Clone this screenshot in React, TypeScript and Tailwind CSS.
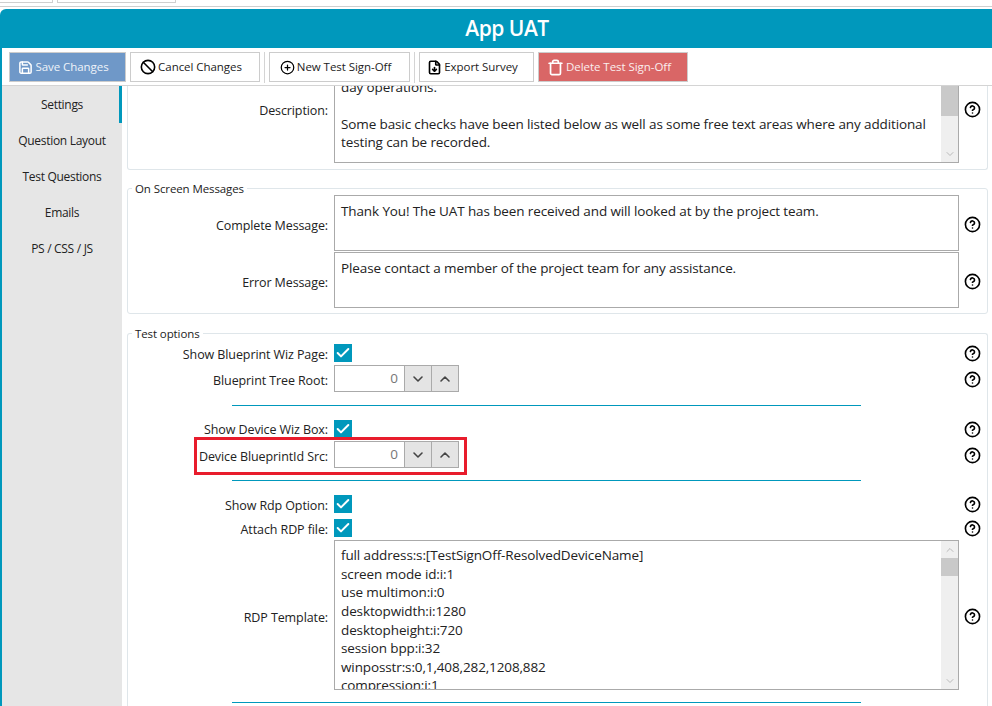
import React from "react";
import { Save, Ban, CirclePlus, Trash, Check, ChevronDown, ChevronUp, CircleHelp, FileDown } from "lucide-react";

function Help({ className = "" }: { className?: string }) {
  return (
    <div className={"absolute left-[836px] w-4 h-4 -translate-y-1/2 " + className}>
      <CircleHelp size={17} strokeWidth={2.3} className="text-black" />
    </div>
  );
}

function ToolBtn({ w, icon, label, variant }: { w: string; icon: React.ReactNode; label: string; variant?: string }) {
  return (
    <div className={`${w} h-[30px] shrink-0 flex items-center justify-center gap-[2px] pr-[8px] border border-[#cccccc] text-[11.5px] tracking-[-0.05px] ${variant ?? "bg-white text-[#222222]"}`}>
      {icon}
      <span>{label}</span>
    </div>
  );
}

function Row({ label, h, mt, labelPt, children }: { label: string; h: string; mt?: string; labelPt?: string; children: React.ReactNode }) {
  return (
    <div className={`flex items-center ${h} ${mt ?? ""} relative`}>
      <div className={`w-[200px] ${labelPt ?? "pt-[4px]"} text-right text-[12.5px] tracking-[-0.1px] text-[#222222] shrink-0`}>{label}</div>
      <div className="ml-[6px]">{children}</div>
      <Help className="top-1/2" />
    </div>
  );
}

function Cb() {
  return (
    <div className="w-[18px] h-[18px] bg-[#0098bc] flex items-center justify-center">
      <Check size={16} strokeWidth={3} className="text-white" />
    </div>
  );
}

function Spin() {
  return (
    <div className="flex w-[125px] h-[27px] border border-[#aaaaaa]">
      <div className="flex-1 flex items-center justify-end pr-[6px] text-[13.5px] text-[#777777]">0</div>
      <div className="w-[27px] bg-[#e4e4e4] border-l border-[#aaaaaa] flex items-center justify-center">
        <ChevronDown size={16} strokeWidth={2.4} className="text-[#444444]" />
      </div>
      <div className="w-[27px] bg-[#e4e4e4] border-l border-[#aaaaaa] flex items-center justify-center">
        <ChevronUp size={16} strokeWidth={2.4} className="text-[#444444]" />
      </div>
    </div>
  );
}

function Rule({ mt }: { mt: string }) {
  return <div className={`${mt} ml-[104px] w-[629px] h-px bg-[#0098bc]`} />;
}

function ScrollBar({ thumbTop, thumbH, up }: { thumbTop: string; thumbH: string; up: boolean }) {
  return (
    <div className="absolute right-0 top-0 bottom-0 w-[17px] bg-[#efefef] flex flex-col items-center justify-between">
      <div className={`w-full h-[17px] flex items-center justify-center ${up ? "" : "invisible"}`}>
        <ChevronUp size={12} strokeWidth={1.5} className="text-[#a8a8a8]" />
      </div>
      <div className={`absolute left-0 w-full bg-[#c9c9c9] ${thumbTop} ${thumbH}`} />
      <div className="w-full h-[17px] flex items-center justify-center">
        <ChevronDown size={12} strokeWidth={1.5} className="text-[#a8a8a8]" />
      </div>
    </div>
  );
}

const rdp = [
  "full address:s:[TestSignOff-ResolvedDeviceName]",
  "screen mode id:i:1",
  "use multimon:i:0",
  "desktopwidth:i:1280",
  "desktopheight:i:720",
  "session bpp:i:32",
  "winposstr:s:0,1,408,282,1208,882",
  "compression:i:1",
];

export default function App() {
  return (
    <div className="w-[992px] h-[706px] bg-white overflow-hidden flex flex-col font-['Open_Sans',sans-serif] text-[#222222]">
      {/* window tab strip */}
      <div className="h-[9px] shrink-0">
        <div className="h-[3px] flex items-stretch">
          <div className="w-[53px] border-r border-b border-[#cfcfcf]" />
          <div className="ml-[4px] w-[119px] border-x border-b border-[#cfcfcf]" />
        </div>
        <div className="mt-[3px] h-px bg-[#cfcfcf]" />
      </div>

      <div className="flex-1 flex flex-col bg-[#0098bc] pl-[2px] rounded-tl-[6px] overflow-hidden">
        {/* title */}
        <div className="h-[39px] shrink-0 flex items-center justify-center pl-[20px] text-white text-[21px] font-semibold tracking-[-0.5px]">
          App UAT
        </div>

        <div className="flex-1 flex flex-col bg-white min-h-0">
          {/* toolbar */}
          <div className="h-[38px] shrink-0 flex items-center pl-[7px] border-b border-[#d4d4d4] pt-[1px]">
            <ToolBtn w="w-[117px]" variant="bg-[#6f98c8] text-[#eef3f9]" icon={<Save size={15} strokeWidth={2.4} className="text-white" />} label="Save Changes" />
            <div className="w-[4px]" />
            <ToolBtn w="w-[130px]" icon={<Ban size={16} strokeWidth={2.4} className="text-black" />} label="Cancel Changes" />
            <div className="w-px h-[31px] bg-[#d4d4d4] mx-[4px]" />
            <ToolBtn w="w-[141px]" icon={<CirclePlus size={15} strokeWidth={2} className="text-black" />} label="New Test Sign-Off" />
            <div className="w-px h-[31px] bg-[#d4d4d4] mx-[4px]" />
            <ToolBtn w="w-[115px]" icon={<FileDown size={15} strokeWidth={2.6} className="text-black" />} label="Export Survey" />
            <div className="w-[4px]" />
            <ToolBtn w="w-[150px]" variant="bg-[#d96666] text-[#fbeeee]" icon={<Trash size={17} strokeWidth={2.4} className="text-white" />} label="Delete Test Sign-Off" />
          </div>

          <div className="flex-1 flex min-h-0">
            {/* sidebar */}
            <div className="w-[120px] shrink-0 bg-[#e6e6e6] flex flex-col text-[12px] tracking-[-0.3px] text-center">
              <div className="h-[37px] flex items-center justify-center border-r-[3px] border-[#0098bc] pl-[3px] pt-[1px]">
                <span>Settings</span>
              </div>
              {["Question Layout", "Test Questions", "Emails", "PS / CSS / JS"].map((t) => (
                <div key={t} className="h-[36px] flex items-center justify-center">
                  {t}
                </div>
              ))}
            </div>

            {/* content */}
            <div className="flex-1 min-w-0 pl-[5px] pr-[4px] flex flex-col overflow-hidden relative">
              {/* description panel */}
              <div className="h-[84px] shrink-0 border-x border-b border-[#dfe6ea] rounded-b-[3px] flex relative">
                <div className="w-[200px] text-right text-[12.5px] tracking-[-0.1px] pt-[16px]">Description:</div>
                <div className="ml-[6px] w-[625px] h-[77px] border-x border-b border-[#aaaaaa] relative overflow-hidden flex flex-col justify-end pl-[6px] pb-[10px] text-[13.5px] tracking-[-0.12px] leading-[18.6px]">
                  <div className="shrink-0">day operations.</div>
                  <div className="h-[18.6px] shrink-0" />
                  <div className="shrink-0">Some basic checks have been listed below as well as some free text areas where any additional</div>
                  <div className="shrink-0">testing can be recorded.</div>
                  <ScrollBar thumbTop="top-0" thumbH="h-[30px]" up={false} />
                </div>
                <Help className="top-[23px]" />
              </div>

              {/* messages panel */}
              <div className="mt-[18px] h-[126px] shrink-0 border border-[#dfe6ea] rounded-[3px] relative pt-[6px]">
                <div className="absolute left-[4px] -top-[8px] bg-white px-[3px] text-[11.5px] tracking-[-0.1px] leading-[16px]">On Screen Messages</div>
                <div className="flex flex-col gap-px">
                  <div className="flex relative">
                    <div className="w-[200px] text-right text-[12.5px] tracking-[-0.1px] self-center pt-[7px]">Complete Message:</div>
                    <div className="ml-[6px] w-[625px] h-[56px] border border-[#aaaaaa] px-[6px] pt-[6px] text-[13.5px] tracking-[-0.12px] leading-[18.6px]">
                      Thank You! The UAT has been received and will looked at by the project team.
                    </div>
                    <Help className="top-[calc(50%+1px)]" />
                  </div>
                  <div className="flex relative">
                    <div className="w-[200px] text-right text-[12.5px] tracking-[-0.1px] self-center pt-[7px]">Error Message:</div>
                    <div className="ml-[6px] w-[625px] h-[56px] border border-[#aaaaaa] px-[6px] pt-[6px] text-[13.5px] tracking-[-0.12px] leading-[18.6px]">
                      Please contact a member of the project team for any assistance.
                    </div>
                    <Help className="top-[calc(50%+1px)]" />
                  </div>
                </div>
              </div>

              {/* test options */}
              <div className="mt-[19px] flex-1 border-x border-t border-[#dfe6ea] rounded-t-[3px] relative pt-[9px]">
                <div className="absolute left-[4px] -top-[8px] bg-white px-[3px] text-[11.5px] tracking-[-0.1px] leading-[16px]">Test options</div>
                <Row label="Show Blueprint Wiz Page:" h="h-[20px]"><Cb /></Row>
                <Row label="Blueprint Tree Root:" h="h-[27px]" mt="mt-[2px]" labelPt="pt-[6px]"><Spin /></Row>
                <Rule mt="mt-[13px]" />
                <Row label="Show Device Wiz Box:" h="h-[20px]" mt="mt-[13px]" labelPt="pt-[2px]"><Cb /></Row>
                <Row label="Device BlueprintId Src:" h="h-[27px]" mt="mt-[2px]" labelPt="pt-[6px]"><Spin /></Row>
                <Rule mt="mt-[12px]" />
                <Row label="Show Rdp Option:" h="h-[20px]" mt="mt-[13px]"><Cb /></Row>
                <Row label="Attach RDP file:" h="h-[20px]" mt="mt-[4px]"><Cb /></Row>
                <div className="flex relative mt-[2px]">
                  <div className="w-[200px] text-right text-[12.5px] tracking-[-0.1px] self-center pt-[6px]">RDP Template:</div>
                  <div className="ml-[6px] w-[625px] h-[150px] border border-[#aaaaaa] relative overflow-hidden pl-[6px] pt-[5px] text-[13.5px] tracking-[-0.12px] leading-[18.62px]">
                    {rdp.map((l) => (
                      <div key={l}>{l}</div>
                    ))}
                    <ScrollBar thumbTop="top-[17px]" thumbH="h-[18px]" up={true} />
                  </div>
                  <Help className="top-[calc(50%+1px)]" />
                </div>
                <Rule mt="mt-[12px]" />

                {/* annotation */}
                <div className="absolute left-[66px] top-[103px] w-[273px] h-[38px] border-[3px] border-[#e81c2c]" />
              </div>
            </div>
          </div>
        </div>
      </div>
    </div>
  );
}
